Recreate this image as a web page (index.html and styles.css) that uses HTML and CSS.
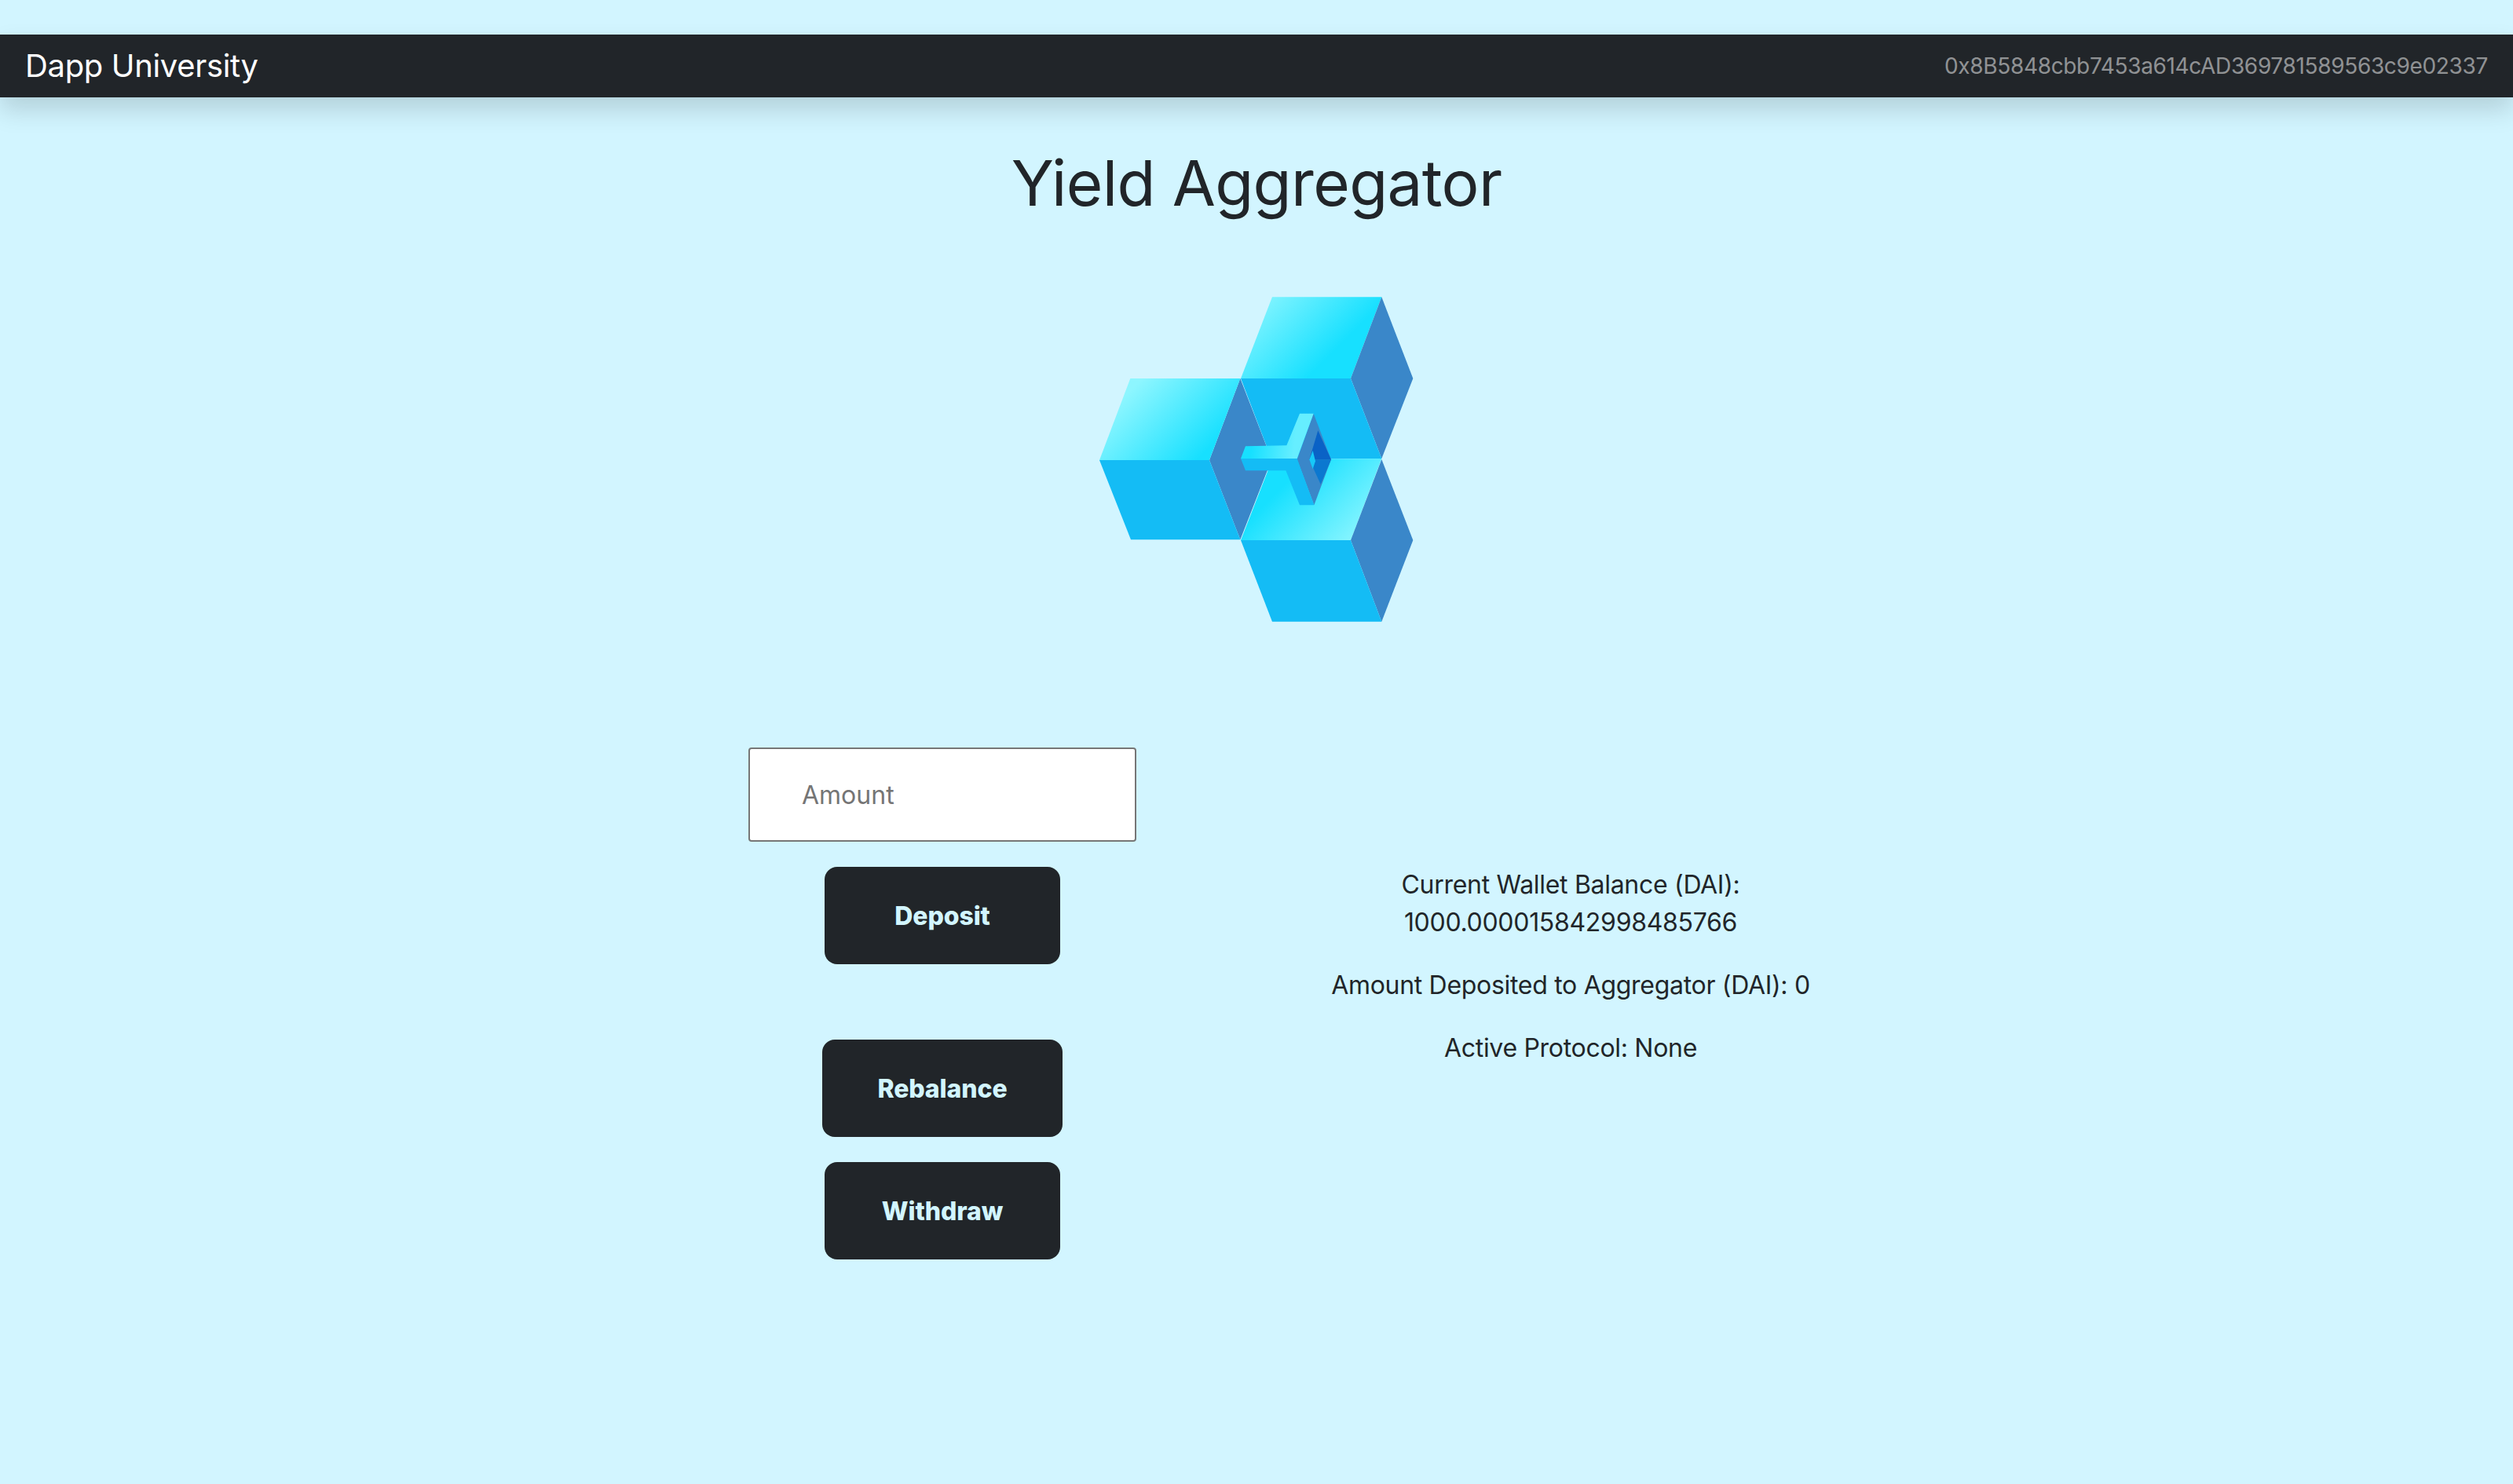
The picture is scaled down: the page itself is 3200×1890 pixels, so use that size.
FILE: index.html
```html
<!DOCTYPE html>
<html lang="en">
<head>
  <meta charset="UTF-8">
  <title>Yield Aggregator</title>
  <link rel="stylesheet" href="styles.css">
</head>
<body>
  <nav class="navbar">
    <a class="brand" href="#">Dapp University</a>
    <small class="account">0x8B5848cbb7453a614cAD369781589563c9e02337</small>
  </nav>

  <main class="content">
    <h1 class="title">Yield Aggregator</h1>

    <svg class="logo" viewBox="0 0 1320 1320" aria-label="logo">
      <defs>
        <linearGradient id="leftTop" gradientUnits="userSpaceOnUse" x1="200" y1="390" x2="460" y2="650">
          <stop offset="0" stop-color="#8df6ff"/>
          <stop offset="1" stop-color="#17e0ff"/>
        </linearGradient>
        <linearGradient id="upperTop" gradientUnits="userSpaceOnUse" x1="620" y1="78" x2="880" y2="338">
          <stop offset="0" stop-color="#8df6ff"/>
          <stop offset="1" stop-color="#17e0ff"/>
        </linearGradient>
        <linearGradient id="lowerTop" gradientUnits="userSpaceOnUse" x1="780" y1="760" x2="1030" y2="1010">
          <stop offset="0" stop-color="#17e0ff"/>
          <stop offset="1" stop-color="#8df6ff"/>
        </linearGradient>
        <linearGradient id="armTop" gradientUnits="userSpaceOnUse" x1="640" y1="640" x2="800" y2="660">
          <stop offset="0" stop-color="#17e0ff"/>
          <stop offset="1" stop-color="#66eeff"/>
        </linearGradient>
      </defs>
      <!-- left cube -->
      <polygon fill="#3a87c9" points="598,366 718,676 598,982 480,678"/>
      <polygon fill="url(#leftTop)" points="178,366 598,366 480,678 60,678"/>
      <polygon fill="#14bcf5" points="60,678 480,678 598,982 180,982"/>
      <!-- upper cube -->
      <polygon fill="url(#upperTop)" points="720,55 1138,55 1020,366 600,366"/>
      <polygon fill="#3a87c9" points="1138,55 1258,366 1138,672 1020,366"/>
      <polygon fill="#14bcf5" points="600,366 1020,366 1138,672 718,676"/>
      <!-- lower cube -->
      <polygon fill="url(#lowerTop)" points="720,676 1138,672 1020,984 600,984"/>
      <polygon fill="#3a87c9" points="1138,675 1258,984 1138,1295 1020,984"/>
      <polygon fill="#14bcf5" points="600,984 1020,984 1138,1295 720,1295"/>
      <!-- centre piece -->
      <polygon fill="#3a87c9" points="878,500 945,676 880,850 815,676"/>
      <polygon fill="#0a62c6" points="895,565 945,676 862,676"/>
      <polygon fill="#0b78d0" points="862,676 945,676 905,770"/>
      <polygon fill="#17c8f8" points="862,676 875,642 885,682 875,712"/>
      <polygon fill="url(#armTop)" points="825,500 878,500 815,672 600,672 618,625 775,622"/>
      <polygon fill="#14bcf5" points="600,672 815,672 880,850 825,850 772,718 618,718"/>
    </svg>

    <div class="row">
      <div class="actions">
        <input class="amount" type="text" placeholder="Amount">
        <button class="btn">Deposit</button>
        <button class="btn btn-wide">Rebalance</button>
        <button class="btn">Withdraw</button>
      </div>
      <div class="stats">
        <p>Current Wallet Balance (DAI):<br>1000.000015842998485766</p>
        <p>Amount Deposited to Aggregator (DAI): 0</p>
        <p>Active Protocol: None</p>
      </div>
    </div>
  </main>
</body>
</html>
```

FILE: styles.css
```css
* {
  box-sizing: border-box;
}
body {
  margin: 0;
  padding-top: 44px;
  min-height: 1890px;
  background-color: #d2f5ff;
  color: #212529;
  font-family: 'Inter', 'Liberation Sans', sans-serif;
  font-size: 32px;
  line-height: 48px;
}
.navbar {
  display: flex;
  justify-content: space-between;
  align-items: center;
  height: 80px;
  padding: 0 32px;
  background-color: #212529;
  box-shadow: 0 16px 32px rgba(0, 0, 0, 0.15);
}
.brand {
  color: #fff;
  font-size: 40px;
  letter-spacing: -0.35px;
  text-decoration: none;
}
.account {
  color: rgba(255, 255, 255, 0.5);
  font-size: 28px;
  letter-spacing: -0.34px;
}
.title {
  margin: 61px 0 79px;
  font-size: 80px;
  line-height: 96px;
  font-weight: 400;
  letter-spacing: -0.65px;
  text-align: center;
}
.logo {
  display: block;
  width: 440px;
  height: 440px;
  margin: 0 auto 152px;
}
.row {
  display: flex;
  width: 1600px;
  margin: 0 auto;
}
.actions {
  width: 800px;
  display: flex;
  flex-direction: column;
  align-items: center;
}
.stats {
  width: 800px;
  padding-top: 151px;
  text-align: center;
  letter-spacing: -0.3px;
}
.stats p {
  margin: 0 0 32px;
}
.amount {
  width: 494px;
  height: 120px;
  padding: 0 66px;
  border: 2px solid #767676;
  border-radius: 4px;
  background: #fff;
  font-family: inherit;
  font-size: 32px;
}
.btn {
  width: 300px;
  height: 124px;
  margin-top: 32px;
  border: none;
  border-radius: 16px;
  background-color: #212529;
  color: #d2f5ff;
  font-family: inherit;
  font-size: 32px;
  font-weight: 800;
  letter-spacing: -0.1px;
}
.btn-wide {
  width: 306px;
  margin-top: 96px;
}
```
